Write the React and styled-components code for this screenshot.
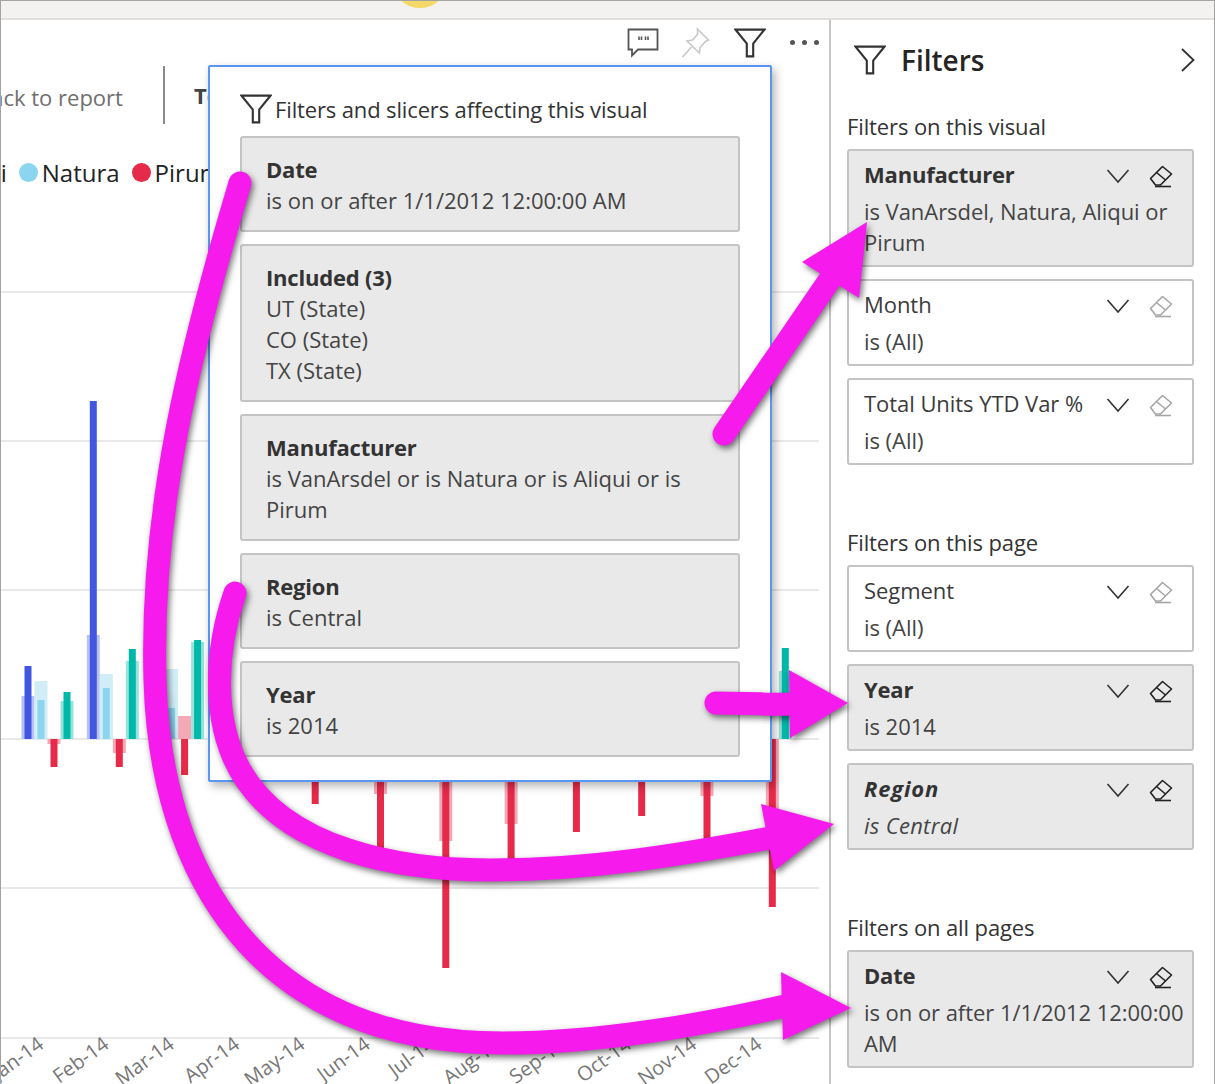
import React from 'react';
import styled, { createGlobalStyle } from 'styled-components';

const FONT = `"Open Sans", "Noto Sans", sans-serif`;

const GlobalStyle = createGlobalStyle`
  html, body {
    margin: 0;
    padding: 0;
    background: #fff;
    overflow: hidden;
  }
  * { box-sizing: border-box; }
`;

const Funnel = ({ size = 30, color = '#333', width = 2 }) => (
  <svg width={size} height={size} viewBox="0 0 30 30" fill="none">
    <path d="M1.5 2.5H28.5L18 15.5V27.5H12V15.5Z" stroke={color} strokeWidth={width} strokeLinejoin="miter" />
  </svg>
);

const Chevron = () => (
  <svg width="24" height="16" viewBox="0 0 24 16" fill="none">
    <path d="M1.5 2L12 14L22.5 2" stroke="#333" strokeWidth="1.6" />
  </svg>
);

const Eraser = ({ active }) => (
  <svg width="24" height="24" viewBox="0 0 24 24" fill="none" stroke={active ? '#222' : '#a6a6a6'} strokeWidth="1.6">
    <path d="M1.5 14.5L13.5 2.5L22.5 10L11.5 21H6.5Z" strokeLinejoin="round" />
    <path d="M7.5 8.5L16.5 16" />
    <path d="M6 22.5H22" />
  </svg>
);

const MONTHS = ['Jan', 'Feb', 'Mar', 'Apr', 'May', 'Jun', 'Jul', 'Aug', 'Sep', 'Oct', 'Nov', 'Dec'];
const GRID = [292, 441, 590, 739, 888, 1038];
const redX = (i) => 54 + 65.3 * i;

// [month index, offset from the red bar, top, bottom, fill, width]
const BLUE = '#4257e0', BLUE_PALE = '#b7c1f3', SKY = '#8bd5ee', SKY_PALE = '#d0edf8';
const RED = '#e62a4a', RED_PALE = '#f4a9b6', TEAL = '#00b8aa', TEAL_PALE = '#99e3dd';
const BARS = [
  [0, -26, 696, 739, BLUE_PALE, 13], [0, -26, 666, 739, BLUE, 7],
  [0, -13, 681, 739, SKY_PALE, 13], [0, -13, 700, 739, SKY, 7],
  [0, 0, 739, 744, RED_PALE, 13], [0, 0, 739, 767, RED, 7],
  [0, 13, 701, 739, TEAL_PALE, 13], [0, 13, 692, 739, TEAL, 7],
  [1, -26, 635, 739, BLUE_PALE, 13], [1, -26, 401, 739, BLUE, 7],
  [1, -13, 674, 739, SKY_PALE, 13], [1, -13, 688, 739, SKY, 7],
  [1, 0, 739, 753, RED_PALE, 13], [1, 0, 739, 767, RED, 7],
  [1, 13, 661, 739, TEAL_PALE, 13], [1, 13, 649, 739, TEAL, 7],
  [2, -13, 669, 739, SKY_PALE, 13], [2, -13, 708, 739, SKY, 7],
  [2, 0, 716, 739, RED_PALE, 13], [2, 0, 739, 775, RED, 7],
  [2, 13, 642, 739, TEAL_PALE, 13], [2, 13, 640, 739, TEAL, 7],
  [4, 0, 739, 804, RED, 7],
  [5, 0, 739, 794, RED_PALE, 13], [5, 0, 739, 870, RED, 7],
  [6, 0, 739, 841, RED_PALE, 13], [6, 0, 739, 968, RED, 7],
  [7, 0, 739, 824, RED_PALE, 13], [7, 0, 739, 870, RED, 7],
  [8, 0, 739, 832, RED, 7],
  [9, 0, 739, 816, RED, 7],
  [10, 0, 739, 796, RED_PALE, 13], [10, 0, 739, 850, RED, 7],
  [11, 0, 739, 810, RED_PALE, 13], [11, 0, 739, 907, RED, 7],
  [11, 13, 671, 739, TEAL_PALE, 13], [11, 13, 648, 739, TEAL, 7],
];

const Chart = () => (
  <ChartSvg viewBox="1 196 828 888">
    {GRID.map((y) => (
      <line key={y} x1="0" x2="819" y1={y} y2={y} stroke="#e9e9e9" strokeWidth="2" />
    ))}
    {BARS.map(([m, dx, top, bottom, fill, w], i) => (
      <rect key={i} x={redX(m) + dx - w / 2} y={top} width={w} height={bottom - top} fill={fill} />
    ))}
    {MONTHS.map((m, i) => (
      <text
        key={m}
        transform={`translate(${redX(i) - 9} 1047) rotate(-36)`}
        textAnchor="end"
        fontFamily={FONT}
        fontSize="20"
        fill="#777"
      >
        {m}-14
      </text>
    ))}
  </ChartSvg>
);

const Arrows = () => (
  <ArrowLayer viewBox="0 0 1215 1084">
    <g fill="none" stroke="#f61bec" strokeWidth="23" strokeLinecap="round">
      <path d="M240 183C190 350 150 510 155 680C160 870 255 1043 503 1043C600 1043 700 1025 790 1005" />
      <path d="M235 593C215 650 212 720 240 770C285 850 400 870 490 870C590 870 680 855 770 838" />
      <path d="M724 434L835 272" />
      <path d="M716 703C740 703 770 705 795 704" />
    </g>
    <g fill="#f61bec">
      <polygon points="781,972 851,1008 783,1040" />
      <polygon points="761,804 834,824 774,871" />
      <polygon points="802,262 867,222 859,298" />
      <polygon points="789,670 848,703 790,738" />
    </g>
  </ArrowLayer>
);

const PopupCard = ({ title, lines }) => (
  <Card $grey $popup>
    <CardTitle $bold>{title}</CardTitle>
    {lines.map((l) => (
      <CardValue key={l}>{l}</CardValue>
    ))}
  </Card>
);

const FilterCard = ({ title, lines, active, italic }) => (
  <Card $grey={active}>
    <CardHead>
      <CardTitle $bold={active} $italic={italic}>{title}</CardTitle>
      <CardIcons>
        <Chevron />
        <Eraser active={active} />
      </CardIcons>
    </CardHead>
    <CardBody $italic={italic}>
      {lines.map((l) => (
        <CardValue key={l}>{l}</CardValue>
      ))}
    </CardBody>
  </Card>
);

const App = () => (
  <Frame>
    <GlobalStyle />
    <TopBar>
      <Sun />
    </TopBar>
    <Main>
      <Report>
        <VisualHeader>
          <svg width="32" height="30" viewBox="0 0 32 30" fill="none" stroke="#555" strokeWidth="1.8">
            <path d="M1.5 1.5H30.5V21.5H11L5 27.5V21.5H1.5Z" />
            <path d="M12 8.5V12M14.5 8.5V12M18.5 8.5V12M21 8.5V12" strokeWidth="1.6" />
          </svg>
          <svg width="31" height="32" viewBox="0 0 30 32" fill="none" stroke="#c8c8c8" strokeWidth="1.6">
            <path d="M17 2L28 13L25 14.5L19.5 20.5L19 26L6.5 14L12 13L17 7.5Z" />
            <path d="M11 20L2 30" />
          </svg>
          <Funnel size={32} color="#333" width={2} />
          <Dots>
            <i /><i /><i />
          </Dots>
        </VisualHeader>
        <BackRow>
          <BackLink>Back to report</BackLink>
          <Divider />
          <VisualName>Total</VisualName>
        </BackRow>
        <Legend>
          <LegendItem $color={SKY_PALE}>Aliqui</LegendItem>
          <LegendItem $color={SKY}>Natura</LegendItem>
          <LegendItem $color={RED}>Pirum</LegendItem>
        </Legend>
        <Chart />
      </Report>
      <Pane>
        <PaneHeader>
          <PaneTitle>
            <Funnel size={32} color="#333" width={2} />
            Filters
          </PaneTitle>
          <svg width="16" height="26" viewBox="0 0 16 26" fill="none">
            <path d="M2 2L13.5 13L2 24" stroke="#333" strokeWidth="1.8" />
          </svg>
        </PaneHeader>
        <Section>
          <SectionLabel>Filters on this visual</SectionLabel>
          <FilterCard active title="Manufacturer" lines={['is VanArsdel, Natura, Aliqui or', 'Pirum']} />
          <FilterCard title="Month" lines={['is (All)']} />
          <FilterCard title="Total Units YTD Var %" lines={['is (All)']} />
        </Section>
        <Section>
          <SectionLabel>Filters on this page</SectionLabel>
          <FilterCard title="Segment" lines={['is (All)']} />
          <FilterCard active title="Year" lines={['is 2014']} />
          <FilterCard active italic title="Region" lines={['is Central']} />
        </Section>
        <Section>
          <SectionLabel>Filters on all pages</SectionLabel>
          <FilterCard active title="Date" lines={['is on or after 1/1/2012 12:00:00', 'AM']} />
        </Section>
      </Pane>
    </Main>
    <Popup>
      <PopupTitle>
        <Funnel size={32} color="#333" width={2} />
        Filters and slicers affecting this visual
      </PopupTitle>
      <PopupCard title="Date" lines={['is on or after 1/1/2012 12:00:00 AM']} />
      <PopupCard title="Included (3)" lines={['UT (State)', 'CO (State)', 'TX (State)']} />
      <PopupCard title="Manufacturer" lines={['is VanArsdel or is Natura or is Aliqui or is', 'Pirum']} />
      <PopupCard title="Region" lines={['is Central']} />
      <PopupCard title="Year" lines={['is 2014']} />
    </Popup>
    <Arrows />
  </Frame>
);

const Frame = styled.div`
  position: relative;
  width: 1215px;
  height: 1084px;
  overflow: hidden;
  background: #fff;
  border: 1px solid #a3a3a3;
  border-bottom: 0;
  font-family: ${FONT};
  color: #333;
  display: flex;
  flex-direction: column;
`;

const TopBar = styled.div`
  height: 19px;
  flex: none;
  background: #f3f2f1;
  border-bottom: 2px solid #e1dfdd;
  position: relative;
  overflow: hidden;
`;

const Sun = styled.div`
  position: absolute;
  left: 397px;
  top: -25px;
  width: 44px;
  height: 32px;
  border-radius: 50%;
  background: #f5d968;
`;

const Main = styled.div`
  flex: 1;
  display: flex;
  min-height: 0;
`;

const Report = styled.div`
  width: 828px;
  flex: none;
  display: flex;
  flex-direction: column;
  overflow: hidden;
`;

const VisualHeader = styled.div`
  height: 46px;
  flex: none;
  display: flex;
  align-items: center;
  justify-content: flex-end;
  gap: 23px;
  padding-right: 10px;

  svg:first-child { margin-right: -2px; }
`;

const Dots = styled.div`
  display: flex;
  gap: 7px;
  margin-left: 1px;
  margin-bottom: 2px;

  i {
    width: 5px;
    height: 5px;
    border-radius: 50%;
    background: #555;
  }
`;

const BackRow = styled.div`
  height: 58px;
  flex: none;
  display: flex;
  align-items: center;
`;

const BackLink = styled.span`
  font-size: 22px;
  color: #6f6f6f;
  margin: 3px 0 0 -24px;
  white-space: nowrap;
`;

const Divider = styled.div`
  width: 2px;
  height: 58px;
  background: #8a8a8a;
  margin: 0 29px 0 40px;
`;

const VisualName = styled.span`
  font-size: 22px;
  font-weight: 700;
  color: #444;
`;

const Legend = styled.div`
  height: 72px;
  flex: none;
  padding-top: 24px;
  display: flex;
  align-items: center;
  gap: 12px;
  margin-left: -80px;
`;

const LegendItem = styled.span`
  display: flex;
  align-items: center;
  gap: 4px;
  font-size: 24px;
  color: #222;
  white-space: nowrap;

  &::before {
    content: '';
    width: 19px;
    height: 19px;
    border-radius: 50%;
    background: ${(p) => p.$color};
  }
`;

const ChartSvg = styled.svg`
  display: block;
  flex: none;
  width: 828px;
  height: 888px;
`;

const Pane = styled.aside`
  flex: 1;
  min-width: 0;
  border-left: 2px solid #c8c6c4;
  padding: 0 20px 0 16px;
  display: flex;
  flex-direction: column;
`;

const PaneHeader = styled.div`
  height: 80px;
  flex: none;
  display: flex;
  align-items: center;
  justify-content: space-between;
  padding: 0 0 0 7px;

  > svg { margin-right: -2px; }
`;

const PaneTitle = styled.h1`
  margin: 0;
  display: flex;
  align-items: center;
  gap: 15px;
  font-size: 28px;
  font-weight: 600;
  color: #252423;
`;

const Section = styled.section`
  display: flex;
  flex-direction: column;
  flex: none;
  gap: 12px;
  padding-top: 11px;
  margin-bottom: 51px;
`;

const SectionLabel = styled.div`
  font-size: 22px;
  line-height: 30px;
  letter-spacing: -0.12px;
  color: #333;
  margin-bottom: -4px;
  white-space: nowrap;
`;

const Card = styled.div`
  background: ${(p) => (p.$grey ? '#e9e9e9' : '#fff')};
  border: 2px solid #c4c4c4;
  border-radius: 3px;
  padding: ${(p) => (p.$popup ? '16px 24px 14px' : '8px 9px 7px 15px')};
`;

const CardHead = styled.div`
  display: flex;
  align-items: center;
  justify-content: space-between;
  padding-right: 10px;
`;

const CardIcons = styled.div`
  display: flex;
  align-items: center;
  gap: 19px;
  flex: none;
  margin-top: 2px;
`;

const CardTitle = styled.div`
  font-size: 22px;
  line-height: 31px;
  font-weight: ${(p) => (p.$bold ? 700 : 400)};
  font-style: ${(p) => (p.$italic ? 'italic' : 'normal')};
  letter-spacing: ${(p) => (p.$italic ? '0.8px' : p.$bold ? '-0.2px' : '-0.05px')};
  color: ${(p) => (p.$bold ? '#333' : '#3b3b3b')};
  white-space: nowrap;
`;

const CardBody = styled.div`
  margin-top: 6px;
  font-style: ${(p) => (p.$italic ? 'italic' : 'normal')};
  letter-spacing: ${(p) => (p.$italic ? '0.3px' : '-0.05px')};
`;

const CardValue = styled.div`
  font-size: 22px;
  line-height: 31px;
  color: #444;
  white-space: nowrap;
`;

const Popup = styled.div`
  position: absolute;
  left: 207px;
  top: 64px;
  width: 564px;
  height: 717px;
  background: #fff;
  border: 2px solid #5a97f2;
  border-radius: 2px;
  box-shadow: 3px 4px 10px rgba(0, 0, 0, 0.3);
  padding: 27px 30px 0;
  display: flex;
  flex-direction: column;
  gap: 12px;
`;

const PopupTitle = styled.div`
  display: flex;
  align-items: center;
  gap: 3px;
  font-size: 22px;
  line-height: 30px;
  letter-spacing: -0.14px;
  color: #333;
  height: 29px;
  margin-bottom: 1px;
  white-space: nowrap;
`;

const ArrowLayer = styled.svg`
  position: absolute;
  left: -1px;
  top: -1px;
  width: 1215px;
  height: 1084px;
  pointer-events: none;
  filter: drop-shadow(2px 3px 3px rgba(0, 0, 0, 0.55));
`;

export default App;
